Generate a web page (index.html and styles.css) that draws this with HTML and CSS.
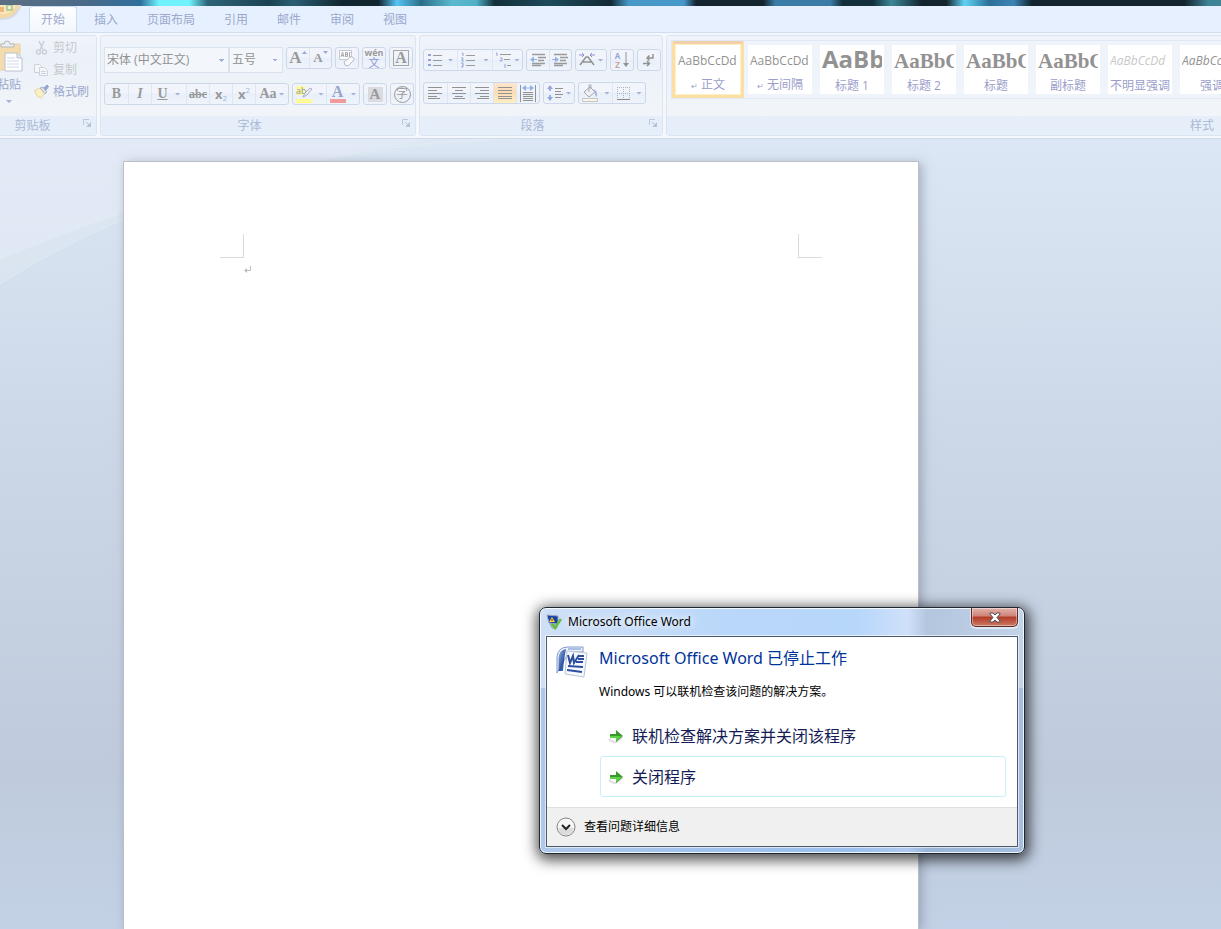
FILE: index.html
```html
<!DOCTYPE html>
<html lang="zh-CN">
<head>
    <meta charset="UTF-8">
    <title>Microsoft Office Word</title>
    <link rel="stylesheet" href="styles.css">
</head>
<body>
    <div class="desktop-strip"></div>

    <nav class="tabs">
        <svg class="orb" width="29" height="27" viewBox="0 0 29 27">
            <circle cx="3" cy="-4" r="19" fill="#d5dbe6"/>
            <circle cx="3" cy="-4" r="17" fill="#f3d9a4"/>
            <circle cx="3" cy="-5" r="14" fill="#f8e7c3"/>
            <path d="M0 2h4v5H0z" fill="#f0b878"/>
            <path d="M6 0h7v6H6z" fill="#b5cf9d"/>
            <path d="M8 1h3v3H8z" fill="#f4efcf"/>
        </svg>
        <button class="tab active">开始</button>
        <button class="tab">插入</button>
        <button class="tab">页面布局</button>
        <button class="tab">引用</button>
        <button class="tab">邮件</button>
        <button class="tab">审阅</button>
        <button class="tab">视图</button>
    </nav>

    <div class="ribbon">
        <!-- clipboard -->
        <section class="group clipboard">
            <div class="group-body">
                <button class="paste">
                    <svg width="32" height="34" viewBox="0 0 32 34">
                        <rect x="1" y="4" width="26" height="26" rx="1" fill="#f5dcae" stroke="#e6cfa6"/>
                        <path d="M8 7V4h3q0-3 3-3t3 3h4v3z" fill="#eceef0" stroke="#b4b8be"/>
                        <path d="M12 13h12l5 5v13H12z" fill="#fff" stroke="#b8c0d0"/>
                        <path d="M24 13v5h5" fill="#e3e8f2" stroke="#b8c0d0"/>
                        <path d="M14 18h8M14 21h12M14 24h12M14 27h12" stroke="#ccd6ea"/>
                    </svg>
                    <span>粘贴</span>
                    <i class="caret"></i>
                </button>
                <div class="clip-list">
                    <button class="clip-btn off">
                        <svg width="16" height="16" viewBox="0 0 16 16" fill="none" stroke="#c9d0da" stroke-width="1.5">
                            <path d="M5 1l4 9M10 1L6 10"/><circle cx="4.500" cy="12" r="2"/><circle cx="10.500" cy="12" r="2"/>
                        </svg>剪切
                    </button>
                    <button class="clip-btn off">
                        <svg width="16" height="16" viewBox="0 0 16 16" fill="#f4f6fa" stroke="#ccd2dc">
                            <path d="M.5 2.500h5l2 2v6h-7z"/><path d="M5.500 5.500h5l3 3v5h-8zM7 9.500h5M7 11.500h5"/>
                        </svg>复制
                    </button>
                    <button class="clip-btn">
                        <svg width="16" height="16" viewBox="0 0 16 16">
                            <path d="M.5 6.500L6 4l5 5-4 5-4-2z" fill="#fbf0c0" stroke="#e2d6a6"/>
                            <path d="M6 4l5 6 2-2-4-5z" fill="#d8dce4" stroke="#b0b8c8"/>
                            <path d="M10 4l3-3 1.500 1.500L12 6z" fill="#9cabd2" stroke="#8f9cc6"/>
                        </svg>格式刷
                    </button>
                </div>
            </div>
            <div class="group-name"><span>剪贴板</span><button class="launcher" aria-label="剪贴板选项"><svg width="9" height="9" viewBox="0 0 9 9"><path d="M.5 6V.5H6" fill="none" stroke="#b9c8dc"/><path d="M3 3l3 3" stroke="#b4c3d8"/><path d="M8 3v5H3z" fill="#b4c3d8"/></svg></button></div>
        </section>

        <!-- font -->
        <section class="group font">
            <div class="group-body">
                <div class="row row-top">
                    <div class="combos">
                        <select class="combo name" aria-label="字体"><option>宋体 (中文正文)</option></select>
                        <select class="combo size" aria-label="字号"><option>五号</option></select>
                    </div>
                    <div class="set">
                        <button class="btn" aria-label="增大字体">
                            <b class="serif big">A</b><svg width="5" height="14" viewBox="0 0 5 14"><path d="M0 3l2.500-3L5 3z" fill="#9aa9d8"/></svg>
                        </button>
                        <button class="btn" aria-label="缩小字体">
                            <b class="serif little">A</b><svg width="5" height="14" viewBox="0 0 5 14"><path d="M0 0h5L2.500 3z" fill="#9aa9d8"/></svg>
                        </button>
                    </div>
                    <div class="set">
                        <button class="btn" aria-label="清除格式">
                            <svg width="18" height="18" viewBox="0 0 18 18">
                                <path d="M1.500 1.500h12v9h-12z" fill="#fff" stroke="#c3cad6"/>
                                <path d="M3 8l1.500-5L6 8M3.500 6.500h2M7.500 3.500v4h2v-4zM7.500 5.500h2M12.500 3.500h-1v4h1" fill="none" stroke="#a6a6a6"/>
                                <path d="M6 13l6-5q4-1 4 3l-6 6q-4 0-4-4z" fill="#fafafc" stroke="#b5bac6"/>
                            </svg>
                        </button>
                    </div>
                    <div class="set">
                        <button class="btn pinyin" aria-label="拼音指南"><small>wén</small><span>文</span></button>
                    </div>
                    <div class="set">
                        <button class="btn" aria-label="字符边框"><b class="serif boxed">A</b></button>
                    </div>
                </div>
                <div class="row">
                    <div class="set">
                        <button class="btn style-btn serif"><b>B</b></button>
                        <button class="btn style-btn serif"><b><i>I</i></b></button>
                        <button class="btn drop-wide serif"><b><u>U</u></b><i class="caret"></i></button>
                        <button class="btn style-btn serif strike"><s>abc</s></button>
                        <button class="btn style-btn sans"><b>x</b><sub>2</sub></button>
                        <button class="btn style-btn sans"><b>x</b><sup>2</sup></button>
                        <button class="btn drop tight serif"><b>Aa</b><i class="caret"></i></button>
                    </div>
                    <div class="set">
                        <button class="btn drop" aria-label="突出显示">
                            <svg width="18" height="18" viewBox="0 0 18 18">
                                <rect x="1" y="1" width="9" height="9" fill="#fdfaa6"/>
                                <rect x="1" y="14" width="16" height="4" fill="#fdfa96"/>
                                <text x="1" y="9" class="svg-ab">ab</text>
                                <path d="M8 12l2-4 5-5 2 1-5 6z" fill="#e9edf5" stroke="#a8b0c2"/>
                            </svg><i class="caret"></i>
                        </button>
                        <button class="btn drop" aria-label="字体颜色">
                            <span class="font-colour">A</span><i class="caret"></i>
                        </button>
                    </div>
                    <div class="set">
                        <button class="btn" aria-label="字符底纹"><b class="serif shaded">A</b></button>
                    </div>
                    <div class="set">
                        <button class="btn" aria-label="带圈字符"><span class="circled">字</span></button>
                    </div>
                </div>
            </div>
            <div class="group-name"><span>字体</span><button class="launcher" aria-label="字体选项"><svg width="9" height="9" viewBox="0 0 9 9"><path d="M.5 6V.5H6" fill="none" stroke="#b9c8dc"/><path d="M3 3l3 3" stroke="#b4c3d8"/><path d="M8 3v5H3z" fill="#b4c3d8"/></svg></button></div>
        </section>

        <!-- paragraph -->
        <section class="group para">
            <div class="group-body">
                <div class="row row-top">
                    <div class="set">
                        <button class="btn drop" aria-label="项目符号">
                            <svg width="15" height="16" viewBox="0 0 15 16"><path d="M0 2h3v2H0zM0 7h3v2H0zM0 12h3v2H0z" fill="#93a5d6"/><path d="M5 3.500h9M5 8.500h9M5 13.500h9" stroke="#9a9a9a"/></svg><i class="caret"></i>
                        </button>
                        <button class="btn drop-wide" aria-label="编号">
                            <svg width="15" height="16" viewBox="0 0 15 16"><path d="M1 1h1v3M0 6h2v1L1 8v1h2M0 11h2v4H0M1 13h1" fill="none" stroke="#93a5d6"/><path d="M5 3.500h9M5 8.500h9M5 13.500h9" stroke="#9a9a9a"/></svg><i class="caret"></i>
                        </button>
                        <button class="btn drop-slim" aria-label="多级列表">
                            <svg width="17" height="16" viewBox="0 0 17 16"><path d="M1 1h1v3M5 6h2v3H5V8M10 12v4" fill="none" stroke="#93a5d6"/><path d="M5 2.500h11M9 7.500h6M12 13.500h4" stroke="#9a9a9a"/></svg><i class="caret"></i>
                        </button>
                    </div>
                    <div class="set">
                        <button class="btn" aria-label="减少缩进量">
                            <svg width="17" height="16" viewBox="0 0 17 16"><path d="M2 2.500h13M8 5.500h8M8 8.500h6M2 11.500h13M2 13.500h9" stroke="#9a9a9a" stroke-width="1.500"/><path d="M7 7H4V4.500L0 7.500l4 3V8h3z" fill="#94b0e4"/></svg>
                        </button>
                        <button class="btn" aria-label="增加缩进量">
                            <svg width="17" height="16" viewBox="0 0 17 16"><path d="M2 2.500h13M8 5.500h8M8 8.500h6M2 11.500h13M2 13.500h9" stroke="#9a9a9a" stroke-width="1.500"/><path d="M0 7h3V4.500l4 3-4 3V8H0z" fill="#94b0e4"/></svg>
                        </button>
                    </div>
                    <div class="set">
                        <button class="btn drop-slim" aria-label="中文版式">
                            <svg width="17" height="16" viewBox="0 0 17 16"><path d="M1 13l6-8h2l6 8M4 10h9" fill="none" stroke="#929292" stroke-width="1.500"/><path d="M0 3h5M3 1l2 2-2 2M16 3h-5M13 1l-2 2 2 2" fill="none" stroke="#8f8fd0"/></svg><i class="caret"></i>
                        </button>
                    </div>
                    <div class="set">
                        <button class="btn sort" aria-label="排序">
                            <span><b>A</b><b>Z</b></span>
                            <svg width="6" height="16" viewBox="0 0 6 16"><path d="M3 0v13" stroke="#929292"/><path d="M0 11h6l-3 4z" fill="#929292"/></svg>
                        </button>
                    </div>
                    <div class="set">
                        <button class="btn" aria-label="显示编辑标记">
                            <svg width="14" height="16" viewBox="0 0 14 16" fill="none" stroke="#929292" stroke-width="1.500"><path d="M11 2v4H5M7.500 3.500L5 6l2.500 2.500M1 11.500h6M5 9l2.500 2.500L5 14"/></svg>
                        </button>
                    </div>
                </div>
                <div class="row">
                    <div class="set">
                        <button class="btn align-btn" aria-label="左对齐"><svg width="15" height="14" viewBox="0 0 15 14"><path d="M0 1.500h14M0 4.500h9M0 7.500h14M0 10.500h9M0 12.500h12" stroke="#929292"/></svg></button>
                        <button class="btn align-btn" aria-label="居中"><svg width="15" height="14" viewBox="0 0 15 14"><path d="M0 1.500h14M3 4.500h8M0 7.500h14M3 10.500h8M1 12.500h12" stroke="#929292"/></svg></button>
                        <button class="btn align-btn" aria-label="右对齐"><svg width="15" height="14" viewBox="0 0 15 14"><path d="M0 1.500h14M5 4.500h9M0 7.500h14M5 10.500h9M2 12.500h12" stroke="#929292"/></svg></button>
                        <button class="btn align-btn pressed" aria-label="两端对齐"><svg width="15" height="14" viewBox="0 0 15 14"><path d="M0 1.500h14M0 4.500h14M0 7.500h14M0 10.500h14M0 12.500h14" stroke="#929292"/></svg></button>
                        <button class="btn align-btn" aria-label="分散对齐"><svg width="17" height="17" viewBox="0 0 17 17"><path d="M.5 0v17M15.500 0v17M3 7.500h10M3 9.500h10M3 11.500h10M3 13.500h10M3 15.500h10" stroke="#929292"/><path d="M2 3l4-3v6zM14 3l-4-3v6z" fill="#94b0e4"/><path d="M5 3h6" stroke="#94b0e4"/></svg></button>
                    </div>
                    <div class="set">
                        <button class="btn drop-slim" aria-label="行距">
                            <svg width="17" height="16" viewBox="0 0 17 16"><path d="M3 1v5M3 10v5" stroke="#94b0e4" stroke-width="2"/><path d="M0 4l3-4 3 4zM0 12h6l-3 4z" fill="#94a8de"/><path d="M8 3.500h8M8 6.500h6M8 9.500h8M8 12.500h6" stroke="#929292"/></svg><i class="caret"></i>
                        </button>
                    </div>
                    <div class="set">
                        <button class="btn drop" aria-label="底纹">
                            <svg width="18" height="18" viewBox="0 0 18 18"><path d="M3 8l6-5 5 5-6 5z" fill="#eef0f4" stroke="#a4a8b0"/><path d="M8 8V2q0-2 2-1v4" fill="none" stroke="#a4a8b0"/><path d="M12 5q5 1 4 8-3-2-2-5z" fill="#a9b9e0"/><path d="M1.500 14.500h15v3h-15z" fill="#f8f4ee" stroke="#c9c4bc"/></svg><i class="caret"></i>
                        </button>
                        <button class="btn drop" aria-label="边框">
                            <svg width="15" height="15" viewBox="0 0 15 15"><path d="M1 1.500h13M1 7.500h13M1.500 1v12M7.500 1v12M13.500 1v12" stroke="#b2b2bd" stroke-dasharray="1 1"/><path d="M1 13.500h13" stroke="#888"/></svg><i class="caret"></i>
                        </button>
                    </div>
                </div>
            </div>
            <div class="group-name"><span>段落</span><button class="launcher" aria-label="段落选项"><svg width="9" height="9" viewBox="0 0 9 9"><path d="M.5 6V.5H6" fill="none" stroke="#b9c8dc"/><path d="M3 3l3 3" stroke="#b4c3d8"/><path d="M8 3v5H3z" fill="#b4c3d8"/></svg></button></div>
        </section>

        <!-- styles -->
        <section class="group styles">
            <div class="group-body">
                <div class="gallery">
                    <button class="tile chosen"><span class="sample">AaBbCcDd</span><span class="tile-name"><small>↵</small> 正文</span></button>
                    <button class="tile"><span class="sample">AaBbCcDd</span><span class="tile-name"><small>↵</small> 无间隔</span></button>
                    <button class="tile"><span class="sample h1">AaBb</span><span class="tile-name">标题 1</span></button>
                    <button class="tile"><span class="sample h2">AaBbC</span><span class="tile-name">标题 2</span></button>
                    <button class="tile"><span class="sample h2">AaBbC</span><span class="tile-name">标题</span></button>
                    <button class="tile"><span class="sample h2">AaBbC</span><span class="tile-name">副标题</span></button>
                    <button class="tile"><span class="sample subtle">AaBbCcDd</span><span class="tile-name">不明显强调</span></button>
                    <button class="tile"><span class="sample em">AaBbCcDd</span><span class="tile-name">强调</span></button>
                </div>
            </div>
            <div class="group-name"><span>样式</span></div>
        </section>
    </div>

    <main class="workspace">
        <svg class="swoosh" width="520" height="150" viewBox="0 0 520 150">
            <path d="M0 0H430Q190 40 0 121z" fill="#e8ecf8" opacity=".6"/>
            <path d="M0 121Q190 40 430 0H520Q190 20 0 145z" fill="#e2eaf3" opacity=".4"/>
            <path d="M0 145Q100 80 240 40T520 0" fill="none" stroke="#e6eef8" stroke-width="1" opacity=".6"/>
        </svg>
        <article class="paper">
            <div class="margins"><i class="corner left"></i><i class="corner right"></i></div>
            <p class="caret-line">
                <svg width="8" height="8" viewBox="0 0 8 8"><path d="M6.500 0v4.500H2" fill="none" stroke="#bdbdbd"/><path d="M0 4.500L3 2v5z" fill="#bdbdbd"/></svg>
            </p>
        </article>
    </main>

    <section class="dialog" role="dialog" aria-labelledby="dialogTitle">
        <header class="titlebar">
            <svg width="16" height="16" viewBox="0 0 16 16">
                <path d="M1 1l11 1v8L3 9z" fill="#1c3fa8" stroke="#9aa5bf"/>
                <path d="M4 10l6 1 1 3H6z" fill="#c9cdd4" stroke="#9a9fa8"/>
                <path d="M6 3l3 5H3z" fill="#ffd83a"/>
                <path d="M6 5v2" stroke="#333"/>
                <path d="M6 10l3 4 6-9" fill="none" stroke="#5fc043" stroke-width="2.500"/>
            </svg>
            <span class="window-title">Microsoft Office Word</span>
            <button class="close" aria-label="关闭">
                <svg width="14" height="11" viewBox="0 0 14 11"><path d="M2 1h3l2 2 2-2h3v1L9 5.500 12 9v1H9L7 8l-2 2H2V9l3-3.500L2 2z" fill="#fff" stroke="#4a4f5c"/></svg>
            </button>
        </header>
        <div class="client">
            <div class="message">
                <svg class="word" width="32" height="32" viewBox="0 0 32 32">
                    <defs><linearGradient id="wordBlue" x1="0" y1="0" x2="1" y2="1"><stop offset="0" stop-color="#9db9e6"/><stop offset=".6" stop-color="#2b55a3"/><stop offset="1" stop-color="#5f86c8"/></linearGradient></defs>
                    <path d="M1 27V11Q2 1 12 1h15v5H13z" fill="#eef3fb" stroke="#7f9acb"/>
                    <path d="M2.500 25V12Q3 4 10 3q-2 9-3 22z" fill="url(#wordBlue)"/>
                    <path d="M12 3h13" stroke="#a9c0e6" stroke-width="2"/>
                    <path d="M11 5l20 2-3 24-19-3z" fill="#f7f9fd" stroke="#b9c4d8"/>
                    <path d="M12 9l2 8 3-7 1 7 5-8" fill="none" stroke="#2b4f9e" stroke-width="2"/>
                    <path d="M23 10h5M22 13h6M20 16h7M12 20l15 1M11 24l15 2" stroke="#2b4f9e" stroke-width="2"/>
                </svg>
                <div class="message-text">
                    <h1 id="dialogTitle">Microsoft Office Word 已停止工作</h1>
                    <p>Windows 可以联机检查该问题的解决方案。</p>
                </div>
            </div>
            <div class="commands">
                <button class="command">
                    <svg width="16" height="16" viewBox="0 0 16 16"><path d="M1 11q4 4 7 3l6-5" fill="none" stroke="#ddd" stroke-width="2"/><path d="M2 6h6V2l7 6-7 6v-4H2z" fill="#3a9a2c"/><path d="M2 8h12l-6 5v-3H2z" fill="#5fd24a"/></svg>
                    联机检查解决方案并关闭该程序
                </button>
                <button class="command focused">
                    <svg width="16" height="16" viewBox="0 0 16 16"><path d="M1 11q4 4 7 3l6-5" fill="none" stroke="#ddd" stroke-width="2"/><path d="M2 6h6V2l7 6-7 6v-4H2z" fill="#3a9a2c"/><path d="M2 8h12l-6 5v-3H2z" fill="#5fd24a"/></svg>
                    关闭程序
                </button>
            </div>
            <footer class="details">
                <button class="expand">
                    <svg width="20" height="20" viewBox="0 0 20 20"><circle cx="10" cy="10" r="9" fill="#f6f6f6" stroke="#858585"/><path d="M2 11h16q-1 7-8 7t-8-7z" fill="#dcdcdc"/><path d="M6 8l4 4 4-4" fill="none" stroke="#222" stroke-width="2"/></svg>
                    查看问题详细信息
                </button>
            </footer>
        </div>
    </section>
</body>
</html>
```
FILE: styles.css
```css
* {
    box-sizing: border-box;
}

body {
    display: flex;
    flex-direction: column;
    height: 100vh;
    margin: 0;
    overflow: hidden;
    background: #dce7f4;
    font-family: "Open Sans", "Noto Sans CJK SC", sans-serif;
    font-size: 12px;
    line-height: 16px;
    color: #9ca8cd;
}

button {
    margin: 0;
    padding: 0;
    border: none;
    background: none;
    font: inherit;
    color: inherit;
    white-space: nowrap;
}

svg {
    display: block;
    flex: none;
}

.desktop-strip {
    flex: none;
    height: 6px;
    background: linear-gradient(to right, #5c6f82 0, #4a6a88 7%, #2f6f9c 11.5%, #6ff2fc 13%, #6ff2fc 15.5%, #2d6478 17%, #1b4252 22%, #295f73 24%, #12262f 28%, #12262f 31%, #55c4f5 32.5%, #2a6f88 34.5%, #5ab9cf 37%, #4fb0c8 39%, #14303b 40.5%, #1d4a5a 45%, #132a35 50%, #4698c8 51.5%, #4798ca 56%, #14242e 57%, #14242e 62.5%, #3a7ca6 63.5%, #3a7ca6 68%, #14303c 69%, #14303c 71.5%, #3c8798 73%, #14242e 75.5%, #14242e 77.5%, #5fd2f5 79%, #2c7098 81%, #3a84b6 83%, #14242e 84.5%, #14242e 97%, #3f8495 99%);
}

/* tabs */
.tabs {
    display: flex;
    flex: none;
    align-items: flex-end;
    height: 27px;
    background: #e6f0fe;
    border-bottom: 1px solid #cfdef1;
}

.orb {
    overflow: hidden;
}

.tab {
    height: 26px;
    margin-right: 5px;
    padding: 0 11px;
    border: 1px solid transparent;
    border-bottom: none;
    border-radius: 3px 3px 0 0;
}

.tab.active {
    background: linear-gradient(#fdfeff, #f3f7fc);
    border-color: #cadaf0;
}

/* ribbon */
.ribbon {
    display: flex;
    flex: none;
    gap: 3px;
    padding: 2px 0;
    overflow: hidden;
    background: #f4f8fd;
    border-bottom: 1px solid #cfdae8;
}

.group {
    flex: none;
    border: 1px solid #dae5f1;
    border-radius: 3px;
    background: linear-gradient(#f0f4fa, #ebf1f8 20%, #f1f5f9 78%);
}

.clipboard {
    width: 112px;
    margin-left: -15px;
}

.font {
    width: 316px;
}

.para {
    width: 244px;
}

.styles {
    width: 1072px;
}

.group-body {
    height: 80px;
    padding: 0 3px;
}

.font .group-body {
    padding-top: 11px;
}

.para .group-body {
    padding-top: 13px;
}

.group-name {
    display: flex;
    height: 19px;
    background: #e6eff9;
    color: #aab8d6;
    text-align: center;
}

.group-name span {
    flex: 1;
    line-height: 19px;
}

.launcher {
    display: flex;
    width: 17px;
    padding: 3px 4px;
}

.caret {
    flex: none;
    width: 6px;
    height: 3px;
    background: #a3b1d6;
    clip-path: polygon(0 0, 100% 0, 50% 100%);
}

.clipboard .group-body {
    display: flex;
    gap: 5px;
}

.paste {
    display: flex;
    flex-direction: column;
    align-items: center;
    width: 40px;
    padding-top: 4px;
}

.paste span {
    margin: 3px 0 7px;
}

.clip-list {
    padding-top: 1px;
}

.clip-btn {
    display: flex;
    align-items: center;
    gap: 3px;
    height: 22px;
}

.clip-btn.off {
    color: #c6c9cf;
}

.row {
    display: flex;
    gap: 3px;
}

.font .row-top {
    height: 36px;
}

.para .row-top {
    height: 33px;
}

.combos {
    display: flex;
}

.combo {
    height: 26px;
    padding: 0 3px;
    border: 1px solid #d9e2ef;
    border-radius: 0;
    appearance: none;
    background-color: #f3f7fc;
    background-image: conic-gradient(from -45deg at 50% 100%, #a3b1d6 90deg, transparent 0);
    background-repeat: no-repeat;
    background-position: right 4px center;
    background-size: 6px 3px;
    font: inherit;
    color: #929292;
}

.combo.name {
    width: 125px;
    padding-left: 2px;
}

.combo.size {
    width: 54px;
    padding-left: 2px;
}

.set {
    display: flex;
    height: 22px;
    border: 1px solid #ccd8ea;
    border-radius: 3px;
    background: linear-gradient(#f1f5fb 45%, #e8eff9 50%, #eff4fb);
}

.btn {
    display: flex;
    align-items: center;
    justify-content: center;
    width: 22px;
    height: 20px;
    color: #999;
}

.btn + .btn {
    border-left: 1px solid #dde6f3;
}

.style-btn,
.align-btn {
    width: 23px;
}

.drop {
    width: 33px;
    gap: 5px;
}

.drop-wide {
    width: 35px;
    gap: 7px;
}

.drop-slim {
    width: 30px;
    gap: 2px;
}

.tight {
    gap: 2px;
}

.pressed {
    background: linear-gradient(#fbe6cf, #fbdcb4 45%, #fdeec4);
}

.serif {
    font-family: "Liberation Serif", serif;
    font-size: 14px;
}

.big {
    font-size: 17px;
}

.little {
    font-size: 13px;
}

.strike {
    font-size: 12px;
    font-weight: bold;
}

.sans {
    font-size: 13px;
}

.sans sub,
.sans sup {
    font-size: 8px;
    line-height: 8px;
    color: #9db4e4;
}

.sans sub {
    align-self: flex-end;
    padding-bottom: 2px;
}

.sans sup {
    align-self: flex-start;
    padding-top: 2px;
}

.pinyin {
    flex-direction: column;
}

.pinyin small {
    font-size: 9px;
    font-weight: bold;
    line-height: 8px;
}

.pinyin span {
    font-size: 11px;
    line-height: 11px;
    color: #8f96d4;
}

.boxed {
    width: 16px;
    border: 1px solid #a6a6a6;
    font-size: 16px;
    line-height: 14px;
}

.shaded {
    width: 15px;
    background: #d9dbe0;
    font-size: 15px;
    line-height: 15px;
}

.circled {
    width: 17px;
    height: 17px;
    border: 1px solid #999;
    border-radius: 50%;
    line-height: 14px;
}

.svg-ab {
    fill: #929292;
    font-size: 9px;
}

.font-colour {
    width: 16px;
    border-bottom: 4px solid #f19a9c;
    font-family: "Liberation Serif", serif;
    font-size: 16px;
    font-weight: bold;
    line-height: 14px;
    color: #98a5cc;
}

.sort {
    gap: 3px;
}

.sort b {
    display: block;
    font-size: 8px;
    line-height: 9px;
    color: #94a6d8;
}

.sort b + b {
    color: #cf9ea4;
}

/* style gallery */
.styles .group-body {
    padding: 4px 4px 0;
}

.gallery {
    display: flex;
    height: 59px;
    border: 1px solid #dfe8f4;
    background: #eff4fb;
}

.tile {
    display: flex;
    flex: none;
    flex-direction: column;
    width: 72px;
    height: 57px;
    border: 4px solid #eff4fb;
    background: #fff;
    text-align: center;
}

.tile.chosen {
    padding: 1px;
    border: 3px solid #fbe0a6;
    border-top-color: #f0d0a8;
    border-radius: 2px;
    outline: 1px solid #fff0c4;
    outline-offset: -4px;
}

.sample {
    height: 33px;
    margin: 0 2px;
    overflow: hidden;
    line-height: 32px;
    color: #929292;
    text-align: left;
}

.sample.h1 {
    font-size: 24px;
    font-weight: bold;
    line-height: 28px;
}

.sample.h2 {
    font-family: "Liberation Serif", serif;
    font-size: 21px;
    font-weight: bold;
}

.sample.subtle {
    font-style: italic;
    color: #c8c8c8;
}

.sample.em {
    font-style: italic;
}

.tile-name {
    color: #9a9ecb;
}

.tile-name small {
    font-size: 8px;
}

/* document */
.workspace {
    position: relative;
    flex: 1;
    min-height: 0;
    padding: 22px 0 0 123px;
    background: linear-gradient(#dce7f5, #d4e0ee 18%, #ccd8e8 37%, #bfcbdc 80%, #c3d1e6);
}

.swoosh {
    position: absolute;
    top: 0;
    left: 0;
}

.paper {
    position: relative;
    width: 796px;
    height: 100%;
    padding: 72px 96px 0;
    border: 1px solid #bcc0c6;
    border-bottom: none;
    background: #fff;
    box-shadow: 3px 2px 10px rgba(110, 120, 140, .5);
}

.margins {
    display: flex;
    justify-content: space-between;
}

.corner {
    width: 24px;
    height: 24px;
    border-bottom: 1px solid #dadada;
}

.corner.left {
    border-right: 1px solid #dadada;
}

.corner.right {
    border-left: 1px solid #dadada;
}

.caret-line {
    margin: 8px 24px;
}

/* error window, floats over the document */
.dialog {
    position: absolute;
    top: 607px;
    left: 539px;
    width: 486px;
    padding: 0 6px 6px;
    border: 1px solid #1f2733;
    border-radius: 7px;
    background: linear-gradient(transparent 80px, rgba(80, 130, 200, .25) 80px), linear-gradient(to right, #cfe0f6, #b9d7fa 40%, #b6d6fa 65%, #cfe1fa 76%, #b3c6de 80%, #c3d3e8);
    box-shadow: inset 0 0 0 1px rgba(255, 255, 255, .8), 1px 3px 14px 3px rgba(0, 0, 0, .7);
    color: #000;
}

.titlebar {
    display: flex;
    align-items: center;
    gap: 6px;
    height: 28px;
}

.window-title {
    flex: 1;
    text-shadow: 0 0 8px #fff, 0 0 8px #fff;
    font-family: "Noto Sans", sans-serif;
}

.close {
    display: flex;
    align-self: flex-start;
    align-items: center;
    justify-content: center;
    width: 47px;
    height: 19px;
    border: 1px solid #5b2a2a;
    border-top: none;
    border-radius: 0 0 5px 5px;
    background: linear-gradient(#e2b3ac, #cf8276 45%, #b23a26 50%, #cc7a66);
    box-shadow: inset 0 0 0 1px rgba(255, 255, 255, .4), 0 1px 0 1px rgba(255, 255, 255, .5);
}

.client {
    border: 1px solid #4d5a6b;
    outline: 1px solid rgba(255, 255, 255, .6);
    background: #fff;
    font-family: "Noto Sans", "Noto Sans CJK SC", sans-serif;
}

.message {
    display: flex;
    gap: 11px;
    height: 78px;
    padding: 9px 9px 0;
}

.message h1 {
    margin: 0;
    font-size: 16px;
    font-weight: normal;
    line-height: 24px;
    color: #003399;
}

.message p {
    margin: 14px 0 0;
}

.commands {
    height: 92px;
    padding: 0 11px 0 53px;
}

.command {
    display: flex;
    align-items: center;
    gap: 8px;
    width: 100%;
    height: 41px;
    padding: 0 7px;
    border: 1px solid transparent;
    border-radius: 3px;
    font-size: 16px;
    color: #151c55;
}

.command.focused {
    border-color: #c6f0fb;
}

.details {
    padding: 9px;
    border-top: 1px solid #dfdfdf;
    background: #f0f0f0;
}

.expand {
    display: flex;
    align-items: center;
    gap: 8px;
    height: 20px;
}
```
